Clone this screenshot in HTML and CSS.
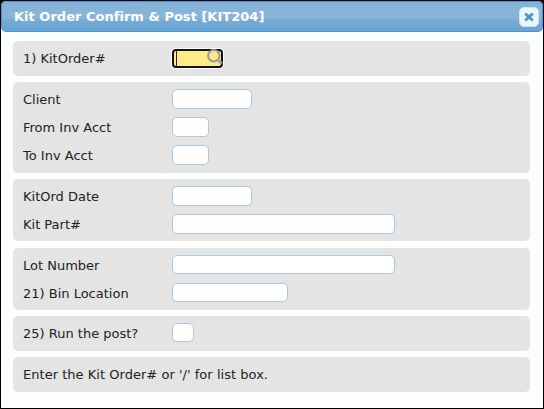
FILE: index.html
```html
<!DOCTYPE html>
<html lang="en">
<head>
<meta charset="utf-8">
<title>Kit Order Confirm &amp; Post</title>
<link rel="stylesheet" href="styles.css">
</head>
<body>
<main class="dialog">
  <header class="titlebar">
    <h1>Kit Order Confirm &amp; Post [KIT204]</h1>
    <button class="close" aria-label="Close">
      <svg width="10" height="10" viewBox="0 0 10 10"><path d="M1.2 1.4 8.8 8.6M8.8 1.4 1.2 8.6" stroke="#4f93c9" stroke-width="2.7" fill="none"/></svg>
    </button>
  </header>
  <div class="content">
    <section class="panel">
      <div class="row"><span class="label">1) KitOrder#</span>
        <div class="field active"><span class="caret"></span>
          <svg class="lens" width="18" height="18" viewBox="0 0 18 18"><circle cx="6.8" cy="6.8" r="5.7" fill="#f8e98f" stroke="#9b9b9b" stroke-width="2"/><path d="M10.6 10.6 14.8 14.8" stroke="#a3a3a3" stroke-width="2.8"/></svg>
        </div></div>
    </section>
    <section class="panel">
      <div class="row"><span class="label">Client</span><div class="field w80"></div></div>
      <div class="row"><span class="label">From Inv Acct</span><div class="field w37"></div></div>
      <div class="row"><span class="label">To Inv Acct</span><div class="field w37"></div></div>
    </section>
    <section class="panel dates">
      <div class="row"><span class="label">KitOrd Date</span><div class="field w80"></div></div>
      <div class="row"><span class="label">Kit Part#</span><div class="field w223"></div></div>
    </section>
    <section class="panel lot">
      <div class="row"><span class="label">Lot Number</span><div class="field short w223"></div></div>
      <div class="row"><span class="label">21) Bin Location</span><div class="field short w116"></div></div>
    </section>
    <section class="panel">
      <div class="row"><span class="label">25) Run the post?</span><div class="field short w22"></div></div>
    </section>
    <section class="panel">
      <div class="row"><span class="message">Enter the Kit Order# or '/' for list box.</span></div>
    </section>
  </div>
</main>
</body>
</html>
```
FILE: styles.css
```css
* { box-sizing: border-box; }
body {
  margin: 0;
  background: #000;
  color: #222;
  font: 13px/16px Verdana, "DejaVu Sans", sans-serif;
}
.dialog {
  width: 544px;
  height: 409px;
  border: 1px solid #000;
  border-radius: 6px 6px 0 0;
  background: #fcfefe;
}
.titlebar {
  display: flex;
  align-items: center;
  justify-content: space-between;
  height: 31px;
  padding: 0 3px 0 12px;
  border: 1px solid #4297d7;
  border-radius: 5px;
  background: linear-gradient(#85b2d9 0, #88b5da 55%, #75abd6 62%, #6ba4d1 100%);
}
h1 {
  margin: 0;
  color: #fff;
  font-size: 13px;
  line-height: 16px;
  letter-spacing: 0.02px;
}
.close {
  display: flex;
  align-items: center;
  justify-content: center;
  width: 20px;
  height: 20px;
  padding: 0;
  border: 1px solid #d0e4f4;
  border-radius: 5px;
  background: #ecf5fc;
}
.content {
  display: flex;
  flex-direction: column;
  gap: 6px;
  padding: 9px 13px 0 12px;
}
.panel {
  padding: 3px 10px 4px;
  border-radius: 5px;
  background: #e4e4e4;
}
.dates { padding-bottom: 3px; }
.lot { margin-top: 1px; padding-bottom: 3px; }
.row {
  display: flex;
  align-items: flex-start;
  height: 28px;
}
.label { width: 149px; }
.label, .message { padding-top: 7px; white-space: nowrap; }
.message { letter-spacing: 0.03px; }
.field {
  height: 20px;
  margin-top: 4px;
  border: 1px solid #a6cae6;
  border-radius: 5px;
  background: #fff;
}
.short { height: 19px; }
.w22 { width: 22px; }
.w37 { width: 37px; }
.w80 { width: 80px; }
.w116 { width: 116px; }
.w223 { width: 223px; }
.active {
  position: relative;
  width: 51px;
  height: 19px;
  margin-top: 5px;
  border: 2px solid #101010;
  border-radius: 4px;
  background: #fbec88;
  box-shadow: 0 0 0 1px #fff;
}
.caret {
  position: absolute;
  left: 2px;
  top: 0;
  width: 1px;
  height: 15px;
  background: #222;
}
.lens {
  position: absolute;
  left: 33px;
  top: -2px;
}
```
